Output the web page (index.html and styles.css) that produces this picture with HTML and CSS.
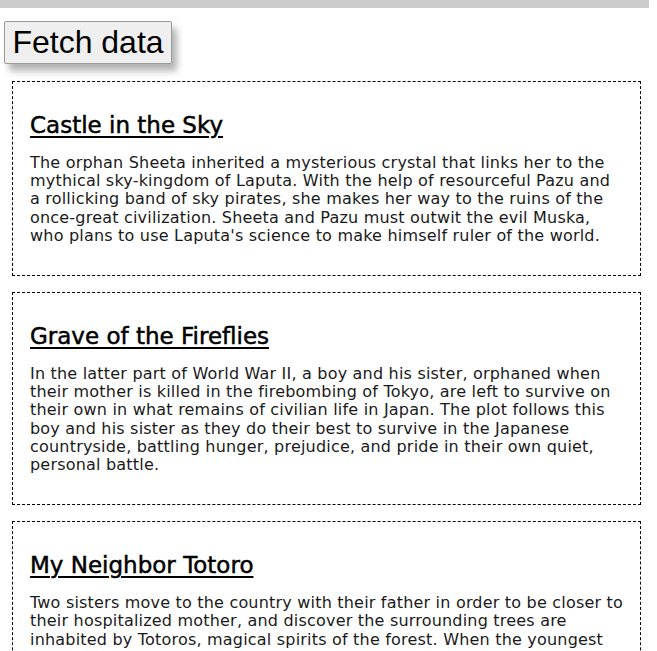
FILE: index.html
```html
<!DOCTYPE html>
<html lang="en">
<head>
<meta charset="utf-8">
<title>Studio Ghibli Films</title>
<link rel="stylesheet" href="styles.css">
</head>
<body>
<div class="topbar"></div>
<button class="fetch-btn" type="button">Fetch data</button>
<main class="films">
  <article class="card">
    <h2 class="card-title">Castle in the Sky</h2>
    <p class="card-text">The orphan Sheeta inherited a mysterious crystal that links her to the mythical sky-kingdom of Laputa. With the help of resourceful Pazu and a rollicking band of sky pirates, she makes her way to the ruins of the once-great civilization. Sheeta and Pazu must outwit the evil Muska, who plans to use Laputa's science to make himself ruler of the world.</p>
  </article>
  <article class="card">
    <h2 class="card-title">Grave of the Fireflies</h2>
    <p class="card-text">In the latter part of World War II, a boy and his sister, orphaned when their mother is killed in the firebombing of Tokyo, are left to survive on their own in what remains of civilian life in Japan. The plot follows this boy and his sister as they do their best to survive in the Japanese countryside, battling hunger, prejudice, and pride in their own quiet, personal battle.</p>
  </article>
  <article class="card">
    <h2 class="card-title">My Neighbor Totoro</h2>
    <p class="card-text">Two sisters move to the country with their father in order to be closer to their hospitalized mother, and discover the surrounding trees are inhabited by Totoros, magical spirits of the forest. When the youngest runs away from home, the older sister seeks help from the spirits to find her.</p>
  </article>
</main>
</body>
</html>
```
FILE: styles.css
```css
html, body {
  margin: 0;
  padding: 0;
  background: #ffffff;
}

body {
  font-family: "DejaVu Sans", "Open Sans", sans-serif;
  color: #111111;
}

.topbar {
  width: 649px;
  height: 8px;
  background: #cccccc;
}

.fetch-btn {
  display: block;
  margin: 13px 0 0 4px;
  width: 168px;
  height: 43px;
  padding: 0;
  font-family: "Liberation Sans", Arial, sans-serif;
  font-size: 32px;
  line-height: 41px;
  color: #000000;
  background: #efefef;
  border: 1px solid #9a9a9a;
  border-radius: 2px;
  box-shadow: 5px 7px 7px rgba(0, 0, 0, 0.3);
}

.films {
  display: flex;
  flex-direction: column;
  gap: 16px;
  margin: 17px 16px 0 12px;
}

.card {
  border: 1px dashed #000000;
  padding: 28px 17px 30px 17px;
}

.card-title {
  margin: 0 0 14px 0;
  font-size: 23px;
  line-height: 30px;
  font-weight: normal;
  -webkit-text-stroke: 0.5px #000000;
  text-decoration: underline;
  text-decoration-thickness: 2px;
  text-underline-offset: 3px;
  color: #000000;
}

.card-text {
  margin: 0;
  font-size: 16px;
  line-height: 18.2px;
  letter-spacing: 0.2px;
  color: #1a1a1a;
}
```
